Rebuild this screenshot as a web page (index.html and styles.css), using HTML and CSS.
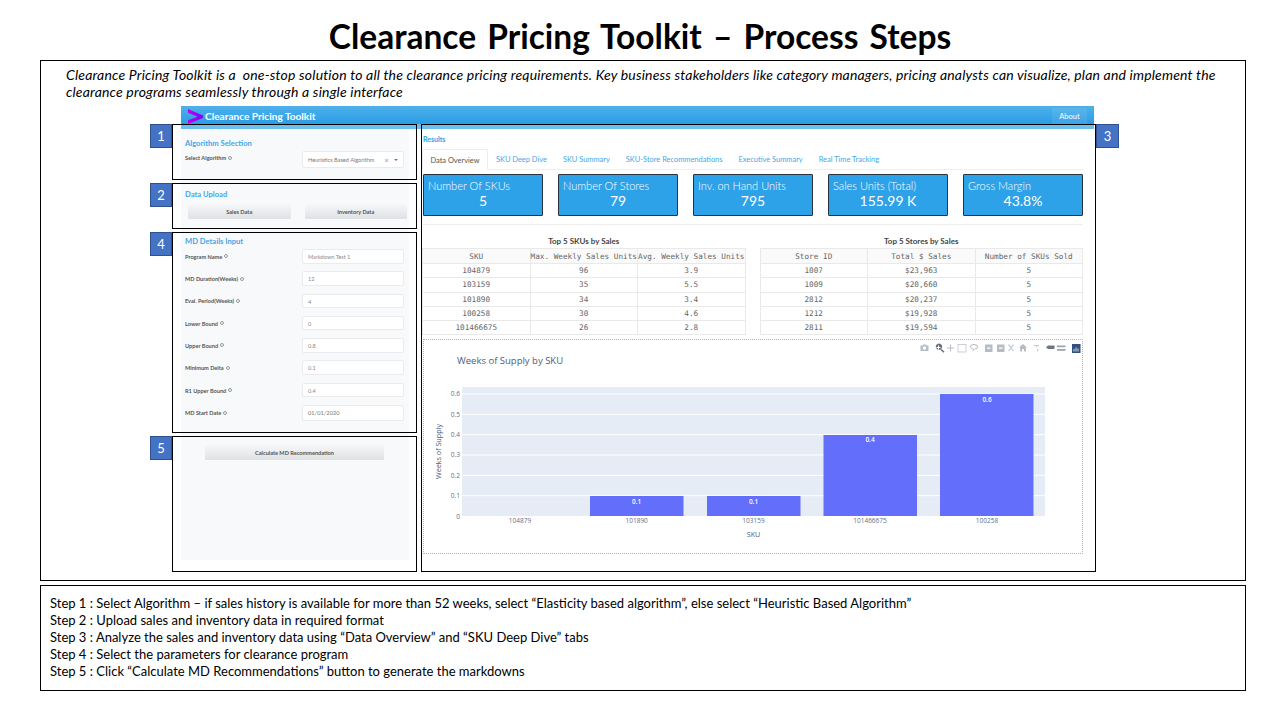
FILE: index.html
```html
<!DOCTYPE html>
<html lang="en">
<head>
<meta charset="utf-8">
<title>Clearance Pricing Toolkit – Process Steps</title>
<link rel="stylesheet" href="styles.css">
</head>
<body>
<h1 class="slide-title">Clearance Pricing Toolkit – Process Steps</h1>
<section class="frame">
  <p class="intro">Clearance Pricing Toolkit is a&nbsp; one-stop solution to all the clearance pricing requirements. Key business stakeholders like category managers, pricing analysts can visualize, plan and implement the<br>clearance programs seamlessly through a single interface</p>
  <div class="app">
    <header class="app-bar">
      <div class="brand">
        <svg class="logo" viewBox="0 0 14 14" width="15" height="15"><defs><linearGradient id="lg" x1="0" y1="0" x2="1" y2="0"><stop offset="0" stop-color="#c400e8"/><stop offset="1" stop-color="#7a00ff"/></linearGradient></defs><path d="M0 0 L14 6 V8.5 L0 14 V10.5 L9 7.2 L0 3.6 Z" fill="url(#lg)"/></svg>
        <span class="brand-name">Clearance Pricing Toolkit</span>
      </div>
      <span class="about">About</span>
    </header>
    <div class="app-body">
      <div class="side">
        <section class="callout callout-algo">
          <span class="tag">1</span>
          <h2 class="sec-title">Algorithm Selection</h2>
          <div class="field">
            <span class="label label-top">Select Algorithm <i class="info"></i></span>
            <div class="select">
              <span>Heuristics Based Algorithm</span>
              <span class="select-ctl"><span class="clear">×</span><span class="caret"></span></span>
            </div>
          </div>
        </section>
        <section class="callout callout-upload">
          <span class="tag">2</span>
          <h2 class="sec-title">Data Upload</h2>
          <div class="upload-row">
            <button class="btn">Sales Data</button>
            <button class="btn">Inventory Data</button>
          </div>
        </section>
        <section class="callout callout-details">
          <span class="tag">4</span>
          <h2 class="sec-title">MD Details Input</h2>
          <div class="fields">
            <div class="field"><span class="label">Program Name <i class="info"></i></span><div class="input">Markdown Test 1</div></div>
            <div class="field"><span class="label">MD Duration(Weeks) <i class="info"></i></span><div class="input">12</div></div>
            <div class="field"><span class="label">Eval. Period(Weeks) <i class="info"></i></span><div class="input">4</div></div>
            <div class="field"><span class="label">Lower Bound <i class="info"></i></span><div class="input">0</div></div>
            <div class="field"><span class="label">Upper Bound <i class="info"></i></span><div class="input">0.8</div></div>
            <div class="field"><span class="label">Minimum Delta <i class="info"></i></span><div class="input">0.1</div></div>
            <div class="field"><span class="label">R1 Upper Bound <i class="info"></i></span><div class="input">0.4</div></div>
            <div class="field"><span class="label">MD Start Date <i class="info"></i></span><div class="input input-date">01/01/2020</div></div>
          </div>
        </section>
        <section class="callout callout-calc">
          <span class="tag">5</span>
          <button class="btn btn-calc">Calculate MD Recommendation</button>
        </section>
      </div>
      <main class="callout results">
        <span class="tag tag-right">3</span>
        <h2 class="results-title">Results</h2>
        <nav class="tabs">
          <span class="tab tab-active">Data Overview</span>
          <span class="tab">SKU Deep Dive</span>
          <span class="tab">SKU Summary</span>
          <span class="tab">SKU-Store Recommendations</span>
          <span class="tab">Executive Summary</span>
          <span class="tab">Real Time Tracking</span>
        </nav>
        <div class="kpis">
          <div class="kpi"><div class="kpi-label">Number Of SKUs</div><div class="kpi-value">5</div></div>
          <div class="kpi"><div class="kpi-label">Number Of Stores</div><div class="kpi-value">79</div></div>
          <div class="kpi"><div class="kpi-label">Inv. on Hand Units</div><div class="kpi-value">795</div></div>
          <div class="kpi"><div class="kpi-label">Sales Units (Total)</div><div class="kpi-value">155.99 K</div></div>
          <div class="kpi"><div class="kpi-label">Gross Margin</div><div class="kpi-value">43.8%</div></div>
        </div>
        <hr class="rule">
        <div class="tables">
          <div class="table-block">
            <h3 class="table-title">Top 5 SKUs by Sales</h3>
            <table class="grid">
              <thead><tr><th>SKU</th><th>Max. Weekly Sales Units</th><th>Avg. Weekly Sales Units</th></tr></thead>
              <tbody>
                <tr><td>104879</td><td>96</td><td>3.9</td></tr>
                <tr><td>103159</td><td>35</td><td>5.5</td></tr>
                <tr><td>101890</td><td>34</td><td>3.4</td></tr>
                <tr><td>100258</td><td>30</td><td>4.6</td></tr>
                <tr><td>101466675</td><td>26</td><td>2.8</td></tr>
              </tbody>
            </table>
          </div>
          <div class="table-block">
            <h3 class="table-title">Top 5 Stores by Sales</h3>
            <table class="grid">
              <thead><tr><th>Store ID</th><th>Total $ Sales</th><th>Number of SKUs Sold</th></tr></thead>
              <tbody>
                <tr><td>1007</td><td>$23,963</td><td>5</td></tr>
                <tr><td>1009</td><td>$20,660</td><td>5</td></tr>
                <tr><td>2812</td><td>$20,237</td><td>5</td></tr>
                <tr><td>1212</td><td>$19,928</td><td>5</td></tr>
                <tr><td>2811</td><td>$19,594</td><td>5</td></tr>
              </tbody>
            </table>
          </div>
        </div>
        <div class="chart">
          <svg class="chart-svg" viewBox="424 340 658 213" width="658" height="213">
            <text class="c-title" x="457" y="364">Weeks of Supply by SKU</text>
            <rect x="462" y="387" width="583" height="129" fill="#e5ecf6"/>
            <g stroke="#fff" stroke-width="1">
              <path d="M462 495.700H1045M462 475.300H1045M462 455H1045M462 434.700H1045M462 414.300H1045M462 394H1045"/>
            </g>
            <g fill="#636efa">
              <rect x="590" y="496" width="93.500" height="20"/>
              <rect x="707" y="496" width="93.500" height="20"/>
              <rect x="823.500" y="435" width="93.500" height="81"/>
              <rect x="940" y="394" width="93.500" height="122"/>
            </g>
            <g class="c-bar" text-anchor="middle">
              <text x="636.700" y="503.500">0.1</text>
              <text x="753.500" y="503.500">0.1</text>
              <text x="870" y="442">0.4</text>
              <text x="987" y="401.500">0.6</text>
            </g>
            <g class="c-tick" text-anchor="end">
              <text x="460" y="518.500">0</text>
              <text x="460" y="498">0.1</text>
              <text x="460" y="477.700">0.2</text>
              <text x="460" y="457.400">0.3</text>
              <text x="460" y="437">0.4</text>
              <text x="460" y="416.700">0.5</text>
              <text x="460" y="396.400">0.6</text>
            </g>
            <g class="c-tick" text-anchor="middle">
              <text x="520" y="523">104879</text>
              <text x="636.700" y="523">101890</text>
              <text x="753.500" y="523">103159</text>
              <text x="870" y="523">101466675</text>
              <text x="987" y="523">100258</text>
            </g>
            <text class="c-axis" x="753.500" y="536.500" text-anchor="middle">SKU</text>
            <text class="c-axis" transform="translate(440.500 451.500) rotate(-90)" text-anchor="middle">Weeks of Supply</text>
            <g fill="#b6bcc4" stroke="none">
              <path d="M920.500 345.500h2l.7-1h2.600l.7 1h2v5.500h-8zm4 .8a1.700 1.700 0 1 0 .01 0z" fill-rule="evenodd"/>
              <path d="M950 344.500h1v3h3v1h-3v3h-1v-3h-3v-1h3z"/>
              <path d="M957.500 344h9v8.500h-9zM958.500 345v6.500h7V345z" fill-rule="evenodd" opacity=".7"/>
              <path d="M974 344c2.400 0 4 1.200 4 2.800s-1.600 2.800-4 2.800l-1 2-.6-.3.700-1.900c-1.500-.4-3.100-1.400-3.100-2.600 0-1.600 1.600-2.800 4-2.800zm0 .9c-1.800 0-3 .9-3 1.900s1.200 1.900 3 1.900 3-.9 3-1.900-1.200-1.900-3-1.900z" fill-rule="evenodd"/>
              <path d="M985 344.500h7.500v7.500H985zM987 347.500v1.300h3.500v-1.300z" fill-rule="evenodd"/>
              <path d="M997 344.500h7.500v7.500H997zM999 347.500v1.300h3.500v-1.300z" fill-rule="evenodd"/>
              <path d="M1008 345l1-1 2 2.300 2-2.300 1 1-2.200 2.800 2.200 3-1 .7-2-2.500-2 2.500-1-.7 2.200-3z" opacity=".7"/>
              <path d="M1023 344l4 3.600h-1.100v3.900h-2v-2.500h-1.800v2.500h-2v-3.900H1019z"/>
              <path d="M1034 345h5v1h-1.800v1.500h-1V346H1034zM1037.200 349h1v2.500h-1z" opacity=".8"/>
            </g>
            <path d="M939 343.500a3.200 3.200 0 1 1-.01 0zM941.500 349l3 2.600-1 1.100-3-2.800zM938 345.500v1.500h-1.500v1h1.500v1.500h1V348h1.500v-1H939v-1.500z" fill="#69737f" fill-rule="evenodd"/>
            <path d="M1046 347.200l2-1.700h6.500v3.500H1048z" fill="#6d7680"/>
            <path d="M1057 345.500h8.500v1.700H1057zM1057 349h8.500v1.700H1057z" fill="#9aa2aa"/>
            <rect x="1072" y="344" width="8.500" height="9" fill="#34507f"/>
            <path d="M1073.500 351.500v-2.500h1v2.500zM1075.500 351.500v-4h1v4zM1077.500 351.500v-3h1v3z" fill="#cfd8e6"/>
          </svg>
        </div>
      </main>
    </div>
  </div>
</section>
<section class="frame-steps">
  <p>Step 1 : Select Algorithm – if sales history is available for more than 52 weeks, select “Elasticity based algorithm”, else select “Heuristic Based Algorithm”</p>
  <p>Step 2 : Upload sales and inventory data in required format</p>
  <p>Step 3 : Analyze the sales and inventory data using “Data Overview” and “SKU Deep Dive” tabs</p>
  <p>Step 4 : Select the parameters for clearance program</p>
  <p>Step 5 : Click “Calculate MD Recommendations” button to generate the markdowns</p>
</section>
</body>
</html>
```
FILE: styles.css
```css
* { box-sizing: border-box; }
html, body { margin: 0; padding: 0; }
body {
  width: 1280px;
  height: 720px;
  overflow: hidden;
  background: #fff;
  color: #000;
  font-family: Lato, "Open Sans", sans-serif;
  padding: 0 34px 0 40px;
}
.slide-title {
  margin: 0 6px 0 0;
  height: 60px;
  padding-top: 15px;
  font-size: 33.500px;
  line-height: 42px;
  font-weight: 700;
  text-align: center;
  word-spacing: 3px;
}
.frame {
  height: 521px;
  border: 1px solid #000;
}
.intro {
  margin: 0;
  padding: 5px 0 0 25px;
  font-size: 14px;
  line-height: 17px;
  font-style: italic;
  letter-spacing: .18px;
  white-space: nowrap;
}
.app {
  margin: 6px 0 0 131px;
  width: 924px;
}
.app-bar {
  margin-left: 9px;
  width: 913px;
  height: 23px;
  padding: 2px 7px 5px 7px;
  display: flex;
  align-items: center;
  justify-content: space-between;
  background: linear-gradient(#4fb1ea, #2a9de6 18px, #6cc0ee 18px, #6cc0ee);
}
.brand { display: flex; align-items: center; gap: 2px; }
.logo { display: block; }
.brand-name { color: #fff; font-size: 10.100px; font-weight: 700; }
.about {
  width: 35px;
  height: 16px;
  line-height: 17px;
  text-align: center;
  color: #fff;
  font-size: 7.500px;
  background: rgba(255,255,255,.08);
}
.app-body {
  display: flex;
  gap: 4px;
  margin-top: -5px;
  position: relative;
}
.side {
  width: 245px;
  display: flex;
  flex-direction: column;
  gap: 3px;
  background: linear-gradient(#f8f9fb, #f8f9fb) 9px 5px / 228px 431px no-repeat;
}
.callout {
  position: relative;
  border: 1px solid #000;
  padding-left: 12px;
  padding-right: 12px;
}
.tag {
  position: absolute;
  left: -23px;
  top: -1px;
  width: 22px;
  height: 24px;
  background: #4472c4;
  border: 1px solid #2f528f;
  color: #fff;
  font-size: 13px;
  line-height: 22px;
  text-align: center;
}
.tag-right { left: auto; right: -24px; width: 23px; }
.callout-algo { height: 56px; padding-top: 13px; }
.callout-upload { height: 46px; padding-top: 5px; }
.callout-details { height: 201px; padding-top: 3px; }
.callout-calc { height: 136px; padding-top: 8px; }
.sec-title {
  margin: 0;
  font-size: 7.600px;
  line-height: 10px;
  font-weight: 700;
  color: #3fa7ea;
}
.field {
  display: flex;
  justify-content: space-between;
  align-items: center;
  font-size: 5.600px;
}
.callout-algo .field { margin-top: 3px; align-items: flex-start; }
.label {
  font-weight: 700;
  color: #555;
  display: flex;
  align-items: center;
  gap: 2px;
}
.label-top { margin-top: 3px; }
.info {
  display: inline-block;
  width: 4px;
  height: 4px;
  border: 1px solid #999;
  border-radius: 50%;
}
.select, .input {
  width: 102px;
  background: #fff;
  border: 1px solid #e9ebee;
  border-radius: 2px;
  color: #8a8a8a;
}
.select {
  height: 17px;
  display: flex;
  align-items: center;
  justify-content: space-between;
  padding: 0 5px;
  color: #777;
}
.select-ctl { display: flex; align-items: center; gap: 5px; }
.clear { color: #999; font-size: 8px; line-height: 8px; }
.caret {
  width: 0;
  height: 0;
  border-left: 2.500px solid transparent;
  border-right: 2.500px solid transparent;
  border-top: 2.500px solid #777;
}
.fields {
  margin-top: 3px;
  display: flex;
  flex-direction: column;
  gap: 7.800px;
}
.input {
  height: 14.500px;
  line-height: 13px;
  padding-left: 5px;
}
.input-date {
  height: 15.500px;
  font-size: 5.700px;
  color: #777;
}
.upload-row {
  margin: 5px -3px 0 3px;
  display: flex;
  gap: 14px;
}
.btn {
  display: block;
  width: 102.500px;
  height: 14.500px;
  padding: 0;
  border: 0;
  border-radius: 1px;
  background: linear-gradient(#f6f7f8, #dfe1e4);
  color: #555;
  font-family: inherit;
  font-size: 5.600px;
  font-weight: 700;
}
.btn-calc { margin-left: 20px; width: 179px; }
.results {
  width: 675px;
  height: 448px;
  padding: 9px 12px 0 0;
}
.results-title {
  margin: 0 0 0 1px;
  font-size: 7px;
  line-height: 10px;
  font-weight: 700;
  color: #2ea2e8;
}
.tabs {
  margin-top: 5px;
  height: 21px;
  display: flex;
  border-bottom: 1px solid #eee;
  font-size: 7.450px;
}
.tab {
  padding: 0 8px;
  height: 21px;
  line-height: 21px;
  color: #3fa7ea;
}
.tab-active {
  width: 66px;
  padding: 0;
  text-align: center;
  color: #555;
  background: #fff;
  border: 1px solid #eee;
  border-bottom-color: #fff;
  border-radius: 2px 2px 0 0;
}
.kpis {
  margin: 4px 0 0 1px;
  display: flex;
  gap: 15px;
}
.kpi {
  width: 120px;
  height: 42px;
  padding: 4px 4px 0;
  background: #2ea2e8;
  border: 1px solid #27323e;
  border-radius: 1px;
  color: #fff;
}
.kpi-label { font-size: 11px; line-height: 13px; font-weight: 300; }
.kpi-value { font-size: 14px; line-height: 17px; text-align: center; font-weight: 400; }
.rule {
  margin: 8px 0 0 1px;
  height: 1px;
  border: 0;
  background: #eee;
}
.tables {
  margin-top: 11px;
  display: flex;
  gap: 14px;
}
.table-block { width: 323.500px; }
.table-title {
  margin: 0 0 2px;
  font-size: 8px;
  line-height: 10px;
  font-weight: 700;
  text-align: center;
  color: #444;
}
.grid {
  width: 100%;
  border-collapse: collapse;
  table-layout: fixed;
  font-family: "DejaVu Sans Mono", "Liberation Mono", monospace;
  font-size: 7.700px;
  color: #666;
  text-align: center;
}
.grid th, .grid td {
  padding: 0;
  border: 1px solid #e9e9e9;
  font-weight: 400;
  white-space: nowrap;
  height: 14.300px;
}
.grid th { height: 15px; background: #fafafa; }
.chart {
  margin: 4px 0 0 1px;
  width: 660px;
  height: 215px;
  border: 1px dotted #a9a9ee;
}
.chart-svg { display: block; font-family: "Open Sans", sans-serif; }
.c-title { font-size: 9.500px; fill: #4d5d7a; }
.c-tick { font-size: 6.500px; fill: #5f6f8a; }
.c-axis { font-size: 7.200px; fill: #4d5d7a; }
.c-bar { font-size: 6.500px; fill: #fff; font-weight: 600; }
.frame-steps {
  margin-top: 4px;
  height: 106px;
  border: 1px solid #000;
  padding: 9px 0 0 9px;
  font-size: 13px;
  line-height: 17px;
}
.frame-steps p { margin: 0; white-space: nowrap; }
```
